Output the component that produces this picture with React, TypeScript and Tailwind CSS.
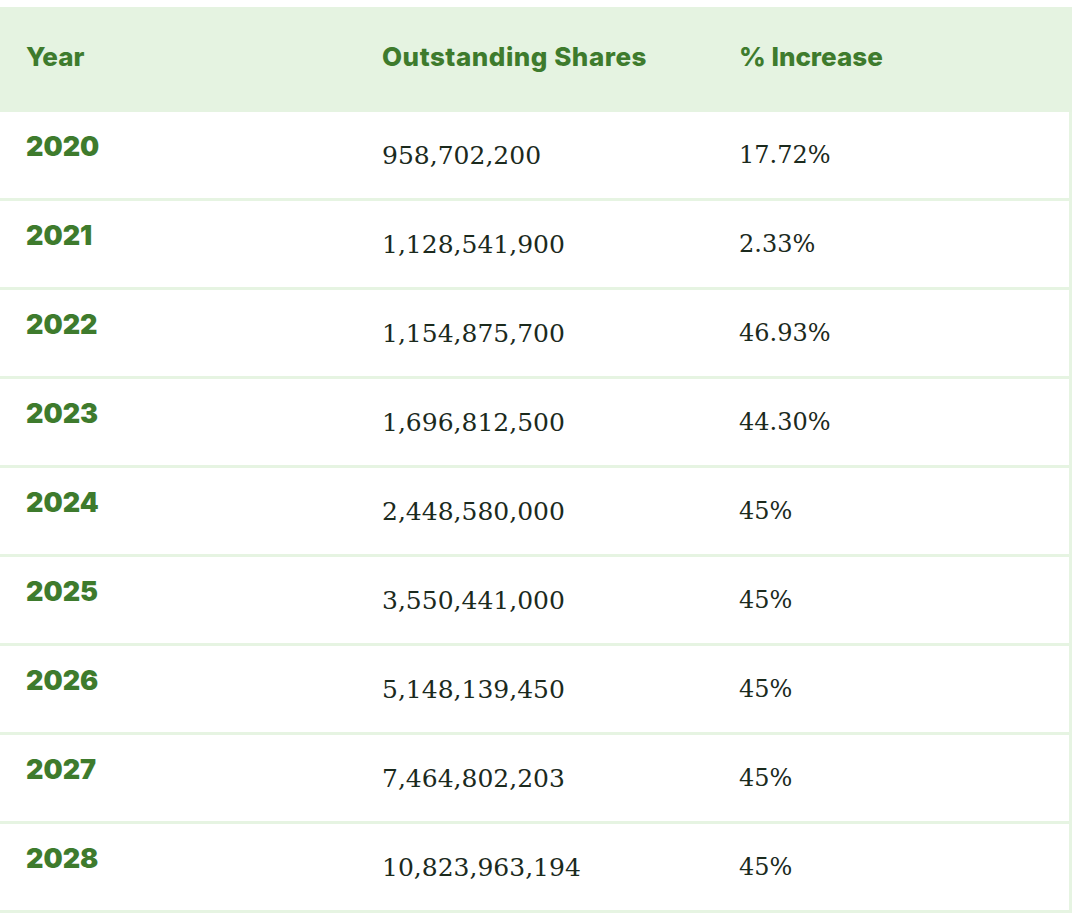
const rows = [
  { year: "2020", shares: "958,702,200", pct: "17.72%" },
  { year: "2021", shares: "1,128,541,900", pct: "2.33%" },
  { year: "2022", shares: "1,154,875,700", pct: "46.93%" },
  { year: "2023", shares: "1,696,812,500", pct: "44.30%" },
  { year: "2024", shares: "2,448,580,000", pct: "45%" },
  { year: "2025", shares: "3,550,441,000", pct: "45%" },
  { year: "2026", shares: "5,148,139,450", pct: "45%" },
  { year: "2027", shares: "7,464,802,203", pct: "45%" },
  { year: "2028", shares: "10,823,963,194", pct: "45%" },
];

const sans = "font-['Inter','Liberation_Sans',sans-serif]";
const serif = "font-['DejaVu_Serif','Liberation_Serif',serif]";

export default function App() {
  return (
    <div className="min-h-[924px] w-[1082px] bg-white pt-[7px]">
      <div className="w-[1072px]">
        <div className={`grid h-[105px] grid-cols-[356px_357px_1fr] bg-[#e5f3e1] pt-[37px] text-[26px] leading-none font-extrabold text-[#3e7b2d] ${sans}`}>
          <div className="pl-[26px]">Year</div>
          <div className="pl-[26px] tracking-[0.02em]">Outstanding Shares</div>
          <div className="pl-[26px]">% Increase</div>
        </div>
        {rows.map((r) => (
          <div
            key={r.year}
            className="grid h-[89px] grid-cols-[356px_357px_1fr] border-r-[3px] border-b-[3px] border-[#e6f4e2]"
          >
            <div className={`pt-[21px] pl-[26px] text-[27px] leading-none font-black text-[#3e7b2d] ${sans}`}>
              {r.year}
            </div>
            <div className={`pt-[31px] pl-[26px] text-[25px] leading-none text-[#1b2a1d] ${serif}`}>{r.shares}</div>
            <div className={`pt-[31px] pl-[26px] text-[24px] leading-none text-[#1b2a1d] ${serif}`}>{r.pct}</div>
          </div>
        ))}
      </div>
    </div>
  );
}
